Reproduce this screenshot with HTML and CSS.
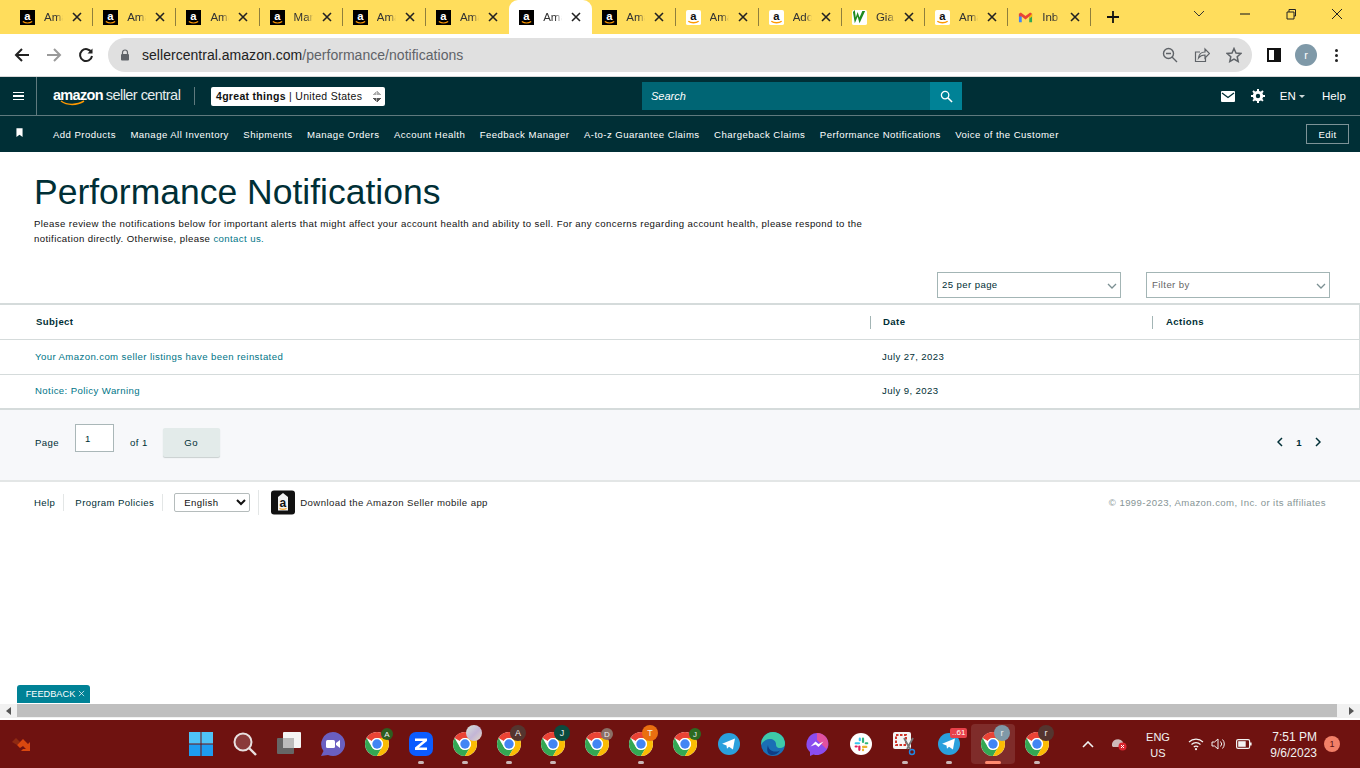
FILE: index.html
```html
<!DOCTYPE html>
<html lang="en">
<head>
<meta charset="utf-8">
<title>Performance Notifications</title>
<link rel="stylesheet" href="styles.css">
</head>
<body>
<svg class="defs" width="0" height="0">
  <symbol id="chrome" viewBox="0 0 24 24">
    <circle cx="12" cy="12" r="12" fill="#fff"/>
    <path fill="#ea4335" d="M12 0a12 12 0 0 1 10.39 6H12a6 6 0 0 0-5.2 3L1.61 6A12 12 0 0 1 12 0z"/>
    <path fill="#34a853" d="M1.61 6l5.19 9a6 6 0 0 0 10.4 0L12 24A12 12 0 0 1 1.61 6z"/>
    <path fill="#fbbc04" d="M22.39 6H12a6 6 0 0 1 5.2 9L12 24A12 12 0 0 0 22.39 6z"/>
    <circle cx="12" cy="12" r="6" fill="#fff"/>
    <circle cx="12" cy="12" r="4.7" fill="#4285f4"/>
  </symbol>
  <symbol id="fav-dark" viewBox="0 0 16 16">
    <rect width="16" height="16" fill="#000"/>
    <text x="8" y="10.5" text-anchor="middle" class="fav-a fav-a-light">a</text>
    <path d="M3 12.2c3 2 7 2 10 0" fill="none" stroke="#f90" stroke-width="1.3"/>
  </symbol>
  <symbol id="fav-light" viewBox="0 0 16 16">
    <rect width="16" height="16" rx="2" fill="#fff"/>
    <text x="8" y="10.5" text-anchor="middle" class="fav-a fav-a-dark">a</text>
    <path d="M2.5 12c3 2.2 8 2.2 11 0" fill="none" stroke="#f90" stroke-width="1.5"/>
  </symbol>
  <symbol id="tab-x" viewBox="0 0 10 10">
    <path d="M1 1l8 8M9 1l-8 8" fill="none" stroke="#222" stroke-width="1.6"/>
  </symbol>
  <symbol id="chev" viewBox="0 0 10 6">
    <path d="M1 1l4 4 4-4" fill="none" stroke="#7b8f92" stroke-width="1.3"/>
  </symbol>
</svg>

<header class="tabstrip">
  <div class="tab"><svg class="fav"><use href="#fav-dark"/></svg><span class="tab-label">Ama</span><svg class="tab-close"><use href="#tab-x"/></svg></div>
  <div class="tab"><svg class="fav"><use href="#fav-dark"/></svg><span class="tab-label">Ama</span><svg class="tab-close"><use href="#tab-x"/></svg></div>
  <div class="tab"><svg class="fav"><use href="#fav-dark"/></svg><span class="tab-label">Ama</span><svg class="tab-close"><use href="#tab-x"/></svg></div>
  <div class="tab"><svg class="fav"><use href="#fav-dark"/></svg><span class="tab-label">Mar</span><svg class="tab-close"><use href="#tab-x"/></svg></div>
  <div class="tab"><svg class="fav"><use href="#fav-dark"/></svg><span class="tab-label">Ama</span><svg class="tab-close"><use href="#tab-x"/></svg></div>
  <div class="tab tab-before-active"><svg class="fav"><use href="#fav-dark"/></svg><span class="tab-label">Ama</span><svg class="tab-close"><use href="#tab-x"/></svg></div>
  <div class="tab tab-active"><svg class="fav"><use href="#fav-dark"/></svg><span class="tab-label">Ama</span><svg class="tab-close"><use href="#tab-x"/></svg></div>
  <div class="tab"><svg class="fav"><use href="#fav-dark"/></svg><span class="tab-label">Ama</span><svg class="tab-close"><use href="#tab-x"/></svg></div>
  <div class="tab"><svg class="fav"><use href="#fav-light"/></svg><span class="tab-label">Ama</span><svg class="tab-close"><use href="#tab-x"/></svg></div>
  <div class="tab"><svg class="fav"><use href="#fav-light"/></svg><span class="tab-label">Ado</span><svg class="tab-close"><use href="#tab-x"/></svg></div>
  <div class="tab"><svg class="fav" viewBox="0 0 16 16"><rect width="16" height="16" rx="2" fill="#fff"/><path d="M1 2l2 12 3-7 2 7 6-13h-3l-3 7-2-6-2 6-1-8z" fill="#1f8a1f"/></svg><span class="tab-label">Gia</span><svg class="tab-close"><use href="#tab-x"/></svg></div>
  <div class="tab"><svg class="fav"><use href="#fav-light"/></svg><span class="tab-label">Ama</span><svg class="tab-close"><use href="#tab-x"/></svg></div>
  <div class="tab"><svg class="fav" viewBox="0 0 16 16"><path d="M1 4v9h3V7z" fill="#4285f4"/><path d="M15 4v9h-3V7z" fill="#34a853"/><path d="M1 4l2-1.4L8 6.5l5-3.9L15 4v3l-3 0-4 3-4-3-3 0z" fill="#ea4335"/><path d="M12 7l3-3v3l-3 2.2z" fill="#fbbc04"/></svg><span class="tab-label">Inb</span><svg class="tab-close"><use href="#tab-x"/></svg></div>
  <svg class="newtab" viewBox="0 0 14 14"><path d="M7 1v12M1 7h12" fill="none" stroke="#111" stroke-width="1.8"/></svg>
  <div class="win-controls">
    <svg class="win-btn" viewBox="0 0 14 14"><path d="M2 4l5 5 5-5" fill="none" stroke="#333" stroke-width="1"/></svg>
    <svg class="win-btn" viewBox="0 0 14 14"><path d="M2 7h10" fill="none" stroke="#222" stroke-width="1.1"/></svg>
    <svg class="win-btn" viewBox="0 0 14 14"><path d="M3 5h7v7H3zM5 5V2.5h6.5V9H10" fill="none" stroke="#222" stroke-width="1"/></svg>
    <svg class="win-btn" viewBox="0 0 14 14"><path d="M2 2l10 10M12 2L2 12" fill="none" stroke="#222" stroke-width="1"/></svg>
  </div>
</header>

<div class="toolbar">
  <svg class="tool" viewBox="0 0 16 16"><path d="M15 8H2M8 2L2 8l6 6" fill="none" stroke="#222" stroke-width="2"/></svg>
  <svg class="tool" viewBox="0 0 16 16"><path d="M1 8h13M8 2l6 6-6 6" fill="none" stroke="#9a9a9a" stroke-width="2"/></svg>
  <svg class="tool" viewBox="0 0 16 16"><path d="M13.5 5.5A6 6 0 1 0 14 9" fill="none" stroke="#222" stroke-width="2"/><path d="M14.5 1.5v5h-5z" fill="#222"/></svg>
  <div class="omnibox">
    <svg class="lock" viewBox="0 0 10 12"><path d="M2.500 5V3.500a2.500 2.500 0 0 1 5 0V5" fill="none" stroke="#5f6368" stroke-width="1.2"/><rect x="1" y="5" width="8" height="6.500" rx="1" fill="#5f6368"/></svg>
    <span class="url"><span class="url-host">sellercentral.amazon.com</span>/performance/notifications</span>
    <span class="omni-icons">
      <svg class="omni-ic" viewBox="0 0 16 16"><circle cx="6.500" cy="6.500" r="5" fill="none" stroke="#5f6368" stroke-width="1.400"/><path d="M4 6.500h5M10 10l5 5" fill="none" stroke="#5f6368" stroke-width="1.400"/></svg>
      <svg class="omni-ic" viewBox="0 0 16 16"><path d="M6 5H1.500v9.500h10V11" fill="none" stroke="#5f6368" stroke-width="1.200"/><path d="M4.500 11c.5-4 3-6 6.500-6V2l4.500 4.500L11 11V8c-3 0-5 1-6.500 3z" fill="none" stroke="#5f6368" stroke-width="1.200"/></svg>
      <svg class="omni-ic" viewBox="0 0 16 16"><path d="M8 1.500l2 4.500 4.800.5-3.600 3.200 1 4.800L8 12l-4.200 2.500 1-4.800L1.200 6.500 6 6z" fill="none" stroke="#5f6368" stroke-width="1.500"/></svg>
    </span>
  </div>
  <svg class="side-panel" viewBox="0 0 14 14"><rect x="1" y="1" width="12" height="12" fill="none" stroke="#111" stroke-width="2"/><rect x="7" y="1" width="6" height="12" fill="#111"/></svg>
  <span class="profile">r</span>
  <span class="kebab"><i></i><i></i><i></i></span>
</div>

<nav class="sc-nav">
  <div class="nav-top">
    <span class="burger"><i></i><i></i><i></i></span>
    <div class="brand">
      <span class="brand-mark">amazon<svg class="smile" viewBox="0 0 26 6"><path d="M1 1c6 4.500 16 4.500 23 0" fill="none" stroke="#f90" stroke-width="1.500"/></svg></span>
      <span class="brand-sub">seller central</span>
    </div>
    <div class="store-select"><span class="store-name"><b>4great things</b> | United States</span><span class="store-arrows"></span></div>
    <div class="search"><span class="search-field">Search</span><span class="search-btn"><svg viewBox="0 0 14 14"><circle cx="5.500" cy="5.500" r="4" fill="none" stroke="#fff" stroke-width="1.400"/><path d="M8.500 8.500l4.500 4.500" stroke="#fff" stroke-width="1.600"/></svg></span></div>
    <div class="nav-right">
      <svg class="mail" viewBox="0 0 14 11"><rect width="14" height="11" rx="1" fill="#fff"/><path d="M1 2l6 4.500L13 2" fill="none" stroke="#002f36" stroke-width="1.300"/></svg>
      <svg class="gear" viewBox="0 0 14 14"><circle cx="7" cy="7" r="3.700" fill="none" stroke="#fff" stroke-width="3"/><path d="M7 0v14M0 7h14M2 2l10 10M12 2L2 12" stroke="#fff" stroke-width="2" stroke-dasharray="2.500 9 2.500"/></svg>
      <span class="nav-lang">EN<i class="caret"></i></span>
      <span class="nav-help">Help</span>
    </div>
  </div>
  <div class="nav-bottom">
    <svg class="bookmark" viewBox="0 0 8 10"><path d="M.5 0h7v10L4 7.500.5 10z" fill="#fff"/></svg>
    <ul class="quick-links">
      <li>Add Products</li>
      <li>Manage All Inventory</li>
      <li>Shipments</li>
      <li>Manage Orders</li>
      <li>Account Health</li>
      <li>Feedback Manager</li>
      <li>A-to-z Guarantee Claims</li>
      <li>Chargeback Claims</li>
      <li>Performance Notifications</li>
      <li>Voice of the Customer</li>
    </ul>
    <span class="edit-btn">Edit</span>
  </div>
</nav>

<main class="page">
  <section class="intro">
    <h1>Performance Notifications</h1>
    <p>Please review the notifications below for important alerts that might affect your account health and ability to sell. For any concerns regarding account health, please respond to the notification directly. Otherwise, please <a class="link">contact us.</a></p>
  </section>
  <div class="filters">
    <div class="dropdown"><span>25 per page</span><svg class="chev"><use href="#chev"/></svg></div>
    <div class="dropdown dropdown-muted"><span>Filter by</span><svg class="chev"><use href="#chev"/></svg></div>
  </div>
  <div class="table">
    <div class="row row-head">
      <div class="cell cell-subject">Subject</div>
      <div class="cell cell-date"><span class="divider"></span>Date</div>
      <div class="cell cell-actions"><span class="divider"></span>Actions</div>
    </div>
    <div class="row">
      <div class="cell cell-subject"><a class="link">Your Amazon.com seller listings have been reinstated</a></div>
      <div class="cell cell-date">July 27, 2023</div>
      <div class="cell cell-actions"></div>
    </div>
    <div class="row">
      <div class="cell cell-subject"><a class="link">Notice: Policy Warning</a></div>
      <div class="cell cell-date">July 9, 2023</div>
      <div class="cell cell-actions"></div>
    </div>
  </div>
  <div class="pager">
    <span class="pager-page">Page</span>
    <span class="pager-input">1</span>
    <span class="pager-of">of 1</span>
    <span class="pager-go">Go</span>
    <span class="pager-nav">
      <svg viewBox="0 0 6 10"><path d="M5 1L1 5l4 4" fill="none" stroke="#002f36" stroke-width="1.500"/></svg>
      <b>1</b>
      <svg viewBox="0 0 6 10"><path d="M1 1l4 4-4 4" fill="none" stroke="#002f36" stroke-width="1.500"/></svg>
    </span>
  </div>
  <footer class="foot">
    <span class="foot-link">Help</span>
    <span class="foot-link foot-link-last">Program Policies</span>
    <select class="foot-select"><option>English</option></select>
    <span class="foot-app">
      <svg class="foot-tag" viewBox="0 0 24 24"><rect width="24" height="24" rx="3" fill="#111"/><path d="M12 2.500l5 4V20H7V6.500z" fill="#f2f2f2"/><text x="12" y="16" text-anchor="middle" class="fav-a fav-a-dark">a</text><path d="M8.500 18c2 1 5 1 7 0" stroke="#f90" fill="none"/></svg>
      Download the Amazon Seller mobile app
    </span>
    <span class="foot-copy">© 1999-2023, Amazon.com, Inc. or its affiliates</span>
  </footer>
  <div class="feedback">FEEDBACK <svg viewBox="0 0 8 8"><path d="M1 1l6 6M7 1L1 7" stroke="#fff" stroke-width=".8"/></svg></div>
</main>

<div class="hscroll">
  <span class="hs-arrow hs-left"></span>
  <span class="hs-thumb"></span>
  <span class="hs-arrow hs-right"></span>
</div>

<div class="taskbar">
  <svg class="tb-corner" viewBox="0 0 24 16"><path d="M1 6l4-4 4 4-3 3z" fill="#8f2a12"/><path d="M6 9l6-6 5 5 2-2v9H10l2-2 3 0-3-3-3 2z" fill="#d9480f"/></svg>
  <div class="tb-apps">
    <span class="app"><svg class="ic" viewBox="0 0 24 24"><path fill="#4fc3f7" d="M0 0h11.500v11.500H0zM12.500 0H24v11.500H12.500z"/><path fill="#1e9cf0" d="M0 12.500h11.500V24H0zM12.500 12.500H24V24H12.500z"/></svg></span>
    <span class="app"><svg class="ic" viewBox="0 0 24 24"><circle cx="10" cy="10" r="8.500" fill="#8a3a3a" stroke="#e8e0e0" stroke-width="2"/><path d="M16 16l7 7" stroke="#e8e0e0" stroke-width="2.400"/></svg></span>
    <span class="app"><svg class="ic" viewBox="0 0 24 24"><rect x="0" y="6" width="17" height="16" rx="1" fill="#666"/><rect x="6" y="0" width="18" height="16" rx="1" fill="#f4f4f4"/><rect x="6" y="6" width="11" height="10" fill="#bbb"/></svg></span>
    <span class="app"><svg class="ic" viewBox="0 0 24 24"><path d="M12 0a12 12 0 1 1-5 22.900L0 24l2.500-5A12 12 0 0 1 12 0z" fill="#6a5fc1"/><rect x="5" y="8" width="9" height="8" rx="1.500" fill="#fff"/><path d="M15 11l4-3v8l-4-3z" fill="#fff"/></svg></span>
    <span class="app"><svg class="ic"><use href="#chrome"/></svg><b class="badge b-olive b-small">A</b></span>
    <span class="app app-open"><svg class="ic" viewBox="0 0 24 24"><rect width="24" height="24" rx="7" fill="#0b5cff"/><path d="M6 6.500h12v2.500l-8 6.500h8V18H6v-2.500l8-6.500H6z" fill="#fff"/></svg></span>
    <span class="app app-open"><svg class="ic"><use href="#chrome"/></svg><b class="badge b-pale"></b></span>
    <span class="app app-open"><svg class="ic"><use href="#chrome"/></svg><b class="badge b-brown">A</b></span>
    <span class="app app-open"><svg class="ic"><use href="#chrome"/></svg><b class="badge b-teal">J</b></span>
    <span class="app"><svg class="ic"><use href="#chrome"/></svg><b class="badge b-tan b-small">D</b></span>
    <span class="app app-open"><svg class="ic"><use href="#chrome"/></svg><b class="badge b-orange">T</b></span>
    <span class="app"><svg class="ic"><use href="#chrome"/></svg><b class="badge b-green b-small">J</b></span>
    <span class="app"><svg class="ic ic-22" viewBox="0 0 24 24"><circle cx="12" cy="12" r="12" fill="#2aa0dc"/><path d="M4.500 11.800L18.500 6l-2.200 12-4.300-3-2.200 2.200-.5-3.700z" fill="#fff"/></svg></span>
    <span class="app"><svg class="ic" viewBox="0 0 24 24"><circle cx="12" cy="12" r="12" fill="#1a6fb5"/><path d="M12 0a12 12 0 0 1 12 12c0 3-3 4.500-6 4-3-.5-3-3-3-4 0-3-3-5-6-5-4 0-8 3-8.800 6A12 12 0 0 1 12 0z" fill="#3fc9a8"/><path d="M7 13c0 4 4 7 8 6.500 2 0 3-.5 4-1-2 3-5 4.500-8 4.500-4 0-6-4-4-10z" fill="#0f3d85"/></svg></span>
    <span class="app"><svg class="ic" viewBox="0 0 24 24"><path d="M12 1a11.500 11 0 1 1-3.500 21.500L5 24v-4A11 11 0 0 1 12 1z" fill="#8a4df0"/><path d="M12 1c6 0 11 4.500 11 10.500 0 2-.5 4-1.500 5.500L12 8z" fill="#e2519f"/><path d="M5.500 14.500l5-5 3 2.500 5-2.500-5 5.500-3-2.500z" fill="#fff"/></svg></span>
    <span class="app"><svg class="ic ic-22" viewBox="0 0 24 24"><circle cx="12" cy="12" r="12" fill="#fff"/><rect x="5" y="10" width="6" height="2.400" rx="1.200" fill="#36c5f0"/><rect x="9.500" y="5" width="2.400" height="4" rx="1.200" fill="#36c5f0"/><rect x="13" y="5" width="2.400" height="6" rx="1.200" fill="#2eb67d"/><rect x="16" y="10" width="4" height="2.400" rx="1.200" fill="#2eb67d"/><rect x="13" y="14" width="6" height="2.400" rx="1.200" fill="#ecb22e"/><rect x="13" y="17" width="2.400" height="3" rx="1.200" fill="#ecb22e"/><rect x="9" y="13.500" width="2.400" height="6" rx="1.200" fill="#e01e5a"/><rect x="5" y="13.500" width="3.500" height="2.400" rx="1.200" fill="#e01e5a"/></svg></span>
    <span class="app app-open"><svg class="ic" viewBox="0 0 24 24"><rect y="0" width="18" height="17" rx="2" fill="#f5f5f5"/><path d="M3 3h10v10H3z" fill="none" stroke="#d0352a" stroke-width="2" stroke-dasharray="2.500 1.500"/><path d="M11 6l6 11M20 6l-6 11" stroke="#777" stroke-width="1.800"/><circle cx="19" cy="20" r="2.500" fill="none" stroke="#1f88e5" stroke-width="1.400"/></svg></span>
    <span class="app app-open"><svg class="ic ic-22" viewBox="0 0 24 24"><circle cx="12" cy="12" r="12" fill="#2aa0dc"/><path d="M4.500 11.800L18.500 6l-2.200 12-4.300-3-2.200 2.200-.5-3.700z" fill="#fff"/></svg><b class="count">..61</b></span>
    <span class="app app-open app-active"><svg class="ic"><use href="#chrome"/></svg><b class="badge b-steel">r</b></span>
    <span class="app app-open"><svg class="ic"><use href="#chrome"/></svg><b class="badge b-brown">r</b></span>
  </div>
  <div class="tray">
    <svg class="tray-chev" viewBox="0 0 12 7"><path d="M1 6l5-5 5 5" fill="none" stroke="#f2f2f2" stroke-width="1.600"/></svg>
    <span class="tray-vpn"><svg viewBox="0 0 16 14"><path d="M1 9a6 6 0 0 1 11-4v5H2z" fill="#cdb9b9"/><circle cx="11.500" cy="9.500" r="4" fill="#d9252f"/><path d="M10 8l3 3M13 8l-3 3" stroke="#fff" stroke-width="1"/></svg></span>
    <span class="tray-lang">ENG<br>US</span>
    <svg class="tray-ic" viewBox="0 0 16 14"><path d="M1 5a10 10 0 0 1 14 0M3.500 7.500a6.500 6.500 0 0 1 9 0M5.800 10a3 3 0 0 1 4.400 0" fill="none" stroke="#f2f2f2" stroke-width="1.200"/><circle cx="8" cy="12.200" r="1.100" fill="#f2f2f2"/></svg>
    <svg class="tray-ic tray-vol" viewBox="0 0 16 14"><path d="M1 5v4h2.500L7 12V2L3.500 5z" fill="none" stroke="#f2f2f2"/><path d="M9.500 4.500a3.500 3.500 0 0 1 0 5M11.500 2.500a6.500 6.500 0 0 1 0 9" fill="none" stroke="#f2f2f2"/></svg>
    <svg class="tray-ic tray-bat" viewBox="0 0 16 10"><rect x=".6" y=".6" width="13" height="8.800" rx="1.500" fill="none" stroke="#f2f2f2" stroke-width="1.200"/><rect x="2.200" y="2.200" width="7.500" height="5.600" fill="#f2f2f2"/><rect x="14" y="3.500" width="1.600" height="3" fill="#f2f2f2"/></svg>
    <span class="tray-time">7:51 PM<br>9/6/2023</span>
    <span class="tray-note">1</span>
  </div>
</div>
</body>
</html>
```

FILE: styles.css
```css
* { box-sizing: border-box; }
html, body { margin: 0; padding: 0; }
body {
  width: 1360px;
  height: 768px;
  overflow: hidden;
  display: flex;
  flex-direction: column;
  font-family: "Liberation Sans", Arial, sans-serif;
  color: #002f36;
  background: #fff;
}
.defs { position: absolute; }
.fav-a { font: bold 12px "Liberation Sans", sans-serif; }
.fav-a-light { fill: #fff; }
.fav-a-dark { fill: #111; }

/* browser tabs */
.tabstrip {
  height: 34px;
  flex: none;
  display: flex;
  align-items: center;
  padding-left: 10px;
  background: #ffdd5c;
}
.tab {
  width: 83.2px;
  height: 34px;
  flex: none;
  display: flex;
  align-items: center;
  padding-left: 10px;
  font-size: 11.5px;
  color: #333;
  background-image: linear-gradient(#8f7f3c, #8f7f3c);
  background-size: 1px 18px;
  background-position: right center;
  background-repeat: no-repeat;
}
.tab-before-active { background-image: none; }
.tab-active {
  background: #fff;
  border-radius: 9px 9px 0 0;
}
.fav { width: 15px; height: 15px; flex: none; }
.tab-label {
  width: 19px;
  margin-left: 9px;
  overflow: hidden;
  white-space: nowrap;
  -webkit-mask-image: linear-gradient(90deg, #000 65%, transparent);
  mask-image: linear-gradient(90deg, #000 65%, transparent);
}
.tab-close { width: 10px; height: 10px; margin-left: 9px; flex: none; }
.newtab { width: 14px; height: 14px; margin-left: 15px; flex: none; }
.win-controls {
  margin-left: auto;
  display: flex;
  gap: 32px;
  padding-right: 16px;
  margin-top: -6px;
}
.win-btn { width: 14px; height: 14px; }

/* toolbar */
.toolbar {
  height: 43px;
  flex: none;
  display: flex;
  align-items: center;
  padding: 0 14px;
  background: #fff;
  border-bottom: 1px solid #d8d8d8;
}
.tool { width: 16px; height: 16px; flex: none; margin-right: 16px; }
.omnibox {
  width: 1144px;
  height: 34px;
  margin-left: -2px;
  display: flex;
  align-items: center;
  padding: 0 7px 0 12px;
  border-radius: 17px;
  background: #e0e0e0;
  font-size: 14px;
  letter-spacing: .03px;
  color: #5f6368;
}
.lock { width: 10px; height: 12px; margin-right: 12px; }
.url-host { color: #222; }
.omni-icons { margin-left: auto; display: flex; gap: 16px; padding-right: 3px; }
.omni-ic { width: 16px; height: 16px; }
.side-panel { width: 14px; height: 14px; margin-left: 15px; }
.profile {
  width: 22px;
  height: 22px;
  margin-left: 14px;
  border-radius: 50%;
  background: #7f99a8;
  color: #fff;
  font-size: 11px;
  display: flex;
  align-items: center;
  justify-content: center;
}
.kebab {
  margin-left: 18px;
  display: flex;
  flex-direction: column;
  gap: 2px;
}
.kebab i { width: 3px; height: 3px; border-radius: 50%; background: #222; }

/* seller central nav */
.sc-nav { flex: none; background: #002f36; color: #fff; }
.nav-top {
  height: 39px;
  display: flex;
  align-items: center;
  border-bottom: 1px solid #5f7a7e;
}
.burger {
  width: 37px;
  height: 100%;
  flex: none;
  display: flex;
  flex-direction: column;
  justify-content: center;
  align-items: center;
  gap: 2px;
  border-right: 1px solid #5f7a7e;
}
.burger i { width: 11px; height: 1.5px; background: #fff; }
.brand {
  width: 142px;
  margin-left: 16px;
  height: 18px;
  flex: none;
  display: flex;
  align-items: baseline;
  border-right: 1px solid #5f7a7e;
  font-size: 14.5px;
  line-height: 16px;
}
.brand-mark { font-weight: bold; position: relative; letter-spacing: -.7px; }
.smile { position: absolute; left: 7px; top: 13px; width: 26px; height: 6px; }
.brand-sub { margin-left: 3px; color: #e6ecec; letter-spacing: -.55px; }
.store-select {
  width: 174px;
  height: 19px;
  margin-left: 16px;
  flex: none;
  display: flex;
  align-items: center;
  padding-left: 5px;
  border-radius: 2px;
  background: #fff;
  color: #111;
  font-size: 10.5px;
  letter-spacing: .3px;
  position: relative;
}
.store-name { white-space: nowrap; }
.store-arrows {
  position: absolute;
  right: 4px;
  top: 4px;
  width: 9px;
  height: 11px;
  background:
    linear-gradient(to top left, #aaa 50%, transparent 50%) left top / 50% 4px no-repeat,
    linear-gradient(to top right, #aaa 50%, transparent 50%) right top / 50% 4px no-repeat,
    linear-gradient(to bottom left, #555 50%, transparent 50%) left bottom / 50% 4px no-repeat,
    linear-gradient(to bottom right, #555 50%, transparent 50%) right bottom / 50% 4px no-repeat;
}
.search {
  width: 320px;
  height: 28px;
  margin-left: 257px;
  flex: none;
  display: flex;
  background: #006574;
}
.search-field {
  flex: 1;
  display: flex;
  align-items: center;
  padding-left: 9px;
  font-size: 11px;
  font-style: italic;
  color: #fff;
}
.search-btn {
  width: 32px;
  background: #008296;
  display: flex;
  align-items: center;
  justify-content: center;
}
.search-btn svg { width: 13px; height: 13px; }
.nav-right {
  margin-left: auto;
  display: flex;
  align-items: center;
  padding-right: 14px;
  font-size: 11.5px;
  letter-spacing: .1px;
}
.mail { width: 14px; height: 11px; }
.gear { width: 14px; height: 14px; margin-left: 16px; }
.nav-lang { margin-left: 15px; display: flex; align-items: center; }
.caret {
  margin-left: 3px;
  border: 3.5px solid transparent;
  border-top-color: #cfd8d9;
  border-bottom: 0;
}
.nav-help { margin-left: 17px; }
.nav-bottom {
  height: 36px;
  display: flex;
  align-items: center;
  padding: 0 11px 0 16px;
}
.bookmark { width: 7px; height: 9px; flex: none; margin-top: -3px; }
.quick-links {
  list-style: none;
  margin: 0 0 0 30px;
  padding: 0;
  display: flex;
  gap: 14.5px;
  font-size: 9.6px;
  letter-spacing: .44px;
  white-space: nowrap;
}
.edit-btn {
  margin-left: auto;
  width: 43px;
  height: 20px;
  display: flex;
  align-items: center;
  justify-content: center;
  border: 1px solid #7d9397;
  font-size: 9.6px;
  letter-spacing: .4px;
}

/* page */
.page {
  flex: 1;
  min-height: 0;
  position: relative;
  font-size: 9.6px;
  letter-spacing: .4px;
}
.intro { padding: 21px 490px 0 34px; }
h1 {
  margin: 0;
  font-size: 35.5px;
  font-weight: 400;
  line-height: 38px;
  letter-spacing: 0;
  color: #002f36;
}
.intro p {
  margin: 5px 0 0;
  line-height: 15px;
  color: #111;
}
.link { color: #007587; }
.filters {
  display: flex;
  justify-content: flex-end;
  gap: 25px;
  padding: 26px 30px 5px 0;
}
.dropdown {
  width: 184px;
  height: 26px;
  display: flex;
  align-items: center;
  justify-content: space-between;
  padding: 0 3px 1px 4px;
  border: 1px solid #a3b5b5;
}
.dropdown-muted { color: #666; padding-left: 5px; }
.chev { width: 10px; height: 6px; margin-top: 3px; }
.table { border-style: solid; border-color: #d5dbdb; border-width: 2px 1px 2px 0; }
.row {
  height: 35px;
  display: flex;
  align-items: center;
  border-top: 1px solid #d5dbdb;
}
.row-head { border-top: 0; height: 34px; font-weight: bold; }
.row:last-child { height: 34px; }
.cell { display: flex; align-items: center; height: 100%; padding-bottom: 2px; }
.cell-subject { width: 870px; padding-left: 35px; }
.row-head .cell-subject { padding-left: 36px; }
.cell-date { width: 282px; padding-left: 12px; position: relative; }
.row-head .cell-date { padding-left: 13px; }
.cell-actions { flex: 1; padding-left: 14px; position: relative; }
.divider {
  position: absolute;
  left: 0;
  top: 11px;
  width: 1px;
  height: 13px;
  background: #a3b5b5;
}
.pager {
  height: 72px;
  display: flex;
  align-items: center;
  padding: 0 35px 6px;
  background: #f7f8fa;
  border-bottom: 2px solid #e3e6e6;
}
.pager-input {
  width: 39px;
  height: 28px;
  margin-left: 16px;
  padding: 8px 0 0 9px;
  background: #fff;
  border: 1px solid #aab7b8;
  align-self: flex-start;
  margin-top: 14px;
}
.pager-of { margin-left: 16px; }
.pager-go {
  width: 57px;
  height: 29px;
  margin-left: 15px;
  display: flex;
  align-items: center;
  justify-content: center;
  border-radius: 2px;
  background: #e3ebea;
  box-shadow: 0 1px 1px #c8cfcf;
}
.pager-nav {
  margin-left: auto;
  display: flex;
  align-items: center;
  gap: 13px;
  padding-right: 4px;
}
.pager-nav svg { width: 6px; height: 10px; }
.foot {
  display: flex;
  align-items: center;
  padding: 8px 34px 0;
}
.foot-link {
  padding-right: 8px;
  margin-right: 11px;
  border-right: 1px solid #e3e6e6;
  line-height: 17px;
}
.foot-select {
  width: 76px;
  height: 19px;
  font: 9.6px "Liberation Sans", sans-serif;
  letter-spacing: .4px;
  color: #111;
  background: #fff;
  border: 1px solid #b5bcbc;
  border-radius: 2px;
  padding-left: 5px;
}
.foot-app {
  display: flex;
  align-items: center;
  gap: 5px;
  margin-left: 8px;
  padding-left: 12px;
  border-left: 1px solid #e3e6e6;
  color: #222;
}
.foot-tag { width: 24px; height: 25px; }
.foot-copy { margin-left: auto; color: #879596; }
.feedback {
  position: absolute;
  left: 17px;
  bottom: 1px;
  width: 73px;
  height: 18px;
  display: flex;
  align-items: center;
  justify-content: center;
  gap: 3px;
  padding: 0 0 1px 4px;
  border-radius: 3px 3px 0 0;
  background: #008296;
  color: #fff;
  font-size: 9.2px;
  letter-spacing: 0;
}
.feedback svg { width: 7px; height: 7px; }

/* scrollbar */
.hscroll {
  height: 16px;
  flex: none;
  display: flex;
  align-items: center;
  padding-bottom: 1px;
  background: #f1f1f1;
  border-bottom: 2px solid #fff;
}
.hs-arrow { width: 17px; display: flex; justify-content: center; }
.hs-arrow::before {
  content: "";
  border: 4px solid transparent;
  border-left-width: 0;
  border-right: 5px solid #555;
}
.hs-right::before {
  border-right-width: 0;
  border-left: 5px solid #555;
}
.hs-thumb { flex: 1; height: 13px; background: #bfbfbf; margin-right: 6px; }

/* taskbar */
.taskbar {
  height: 48px;
  flex: none;
  display: flex;
  align-items: center;
  background: #6f1210;
  color: #f2f2f2;
}
.tb-corner { width: 24px; height: 16px; margin-left: 11px; flex: none; }
.tb-apps { display: flex; margin-left: 144px; flex: none; }
.app {
  width: 44px;
  height: 40px;
  display: flex;
  align-items: center;
  justify-content: center;
  position: relative;
}
.ic { width: 24px; height: 24px; }
.ic-22 { width: 22px; height: 22px; }
.app-open::after {
  content: "";
  position: absolute;
  left: 19px;
  bottom: 0;
  width: 6px;
  height: 3px;
  border-radius: 2px;
  background: #c9b7b6;
}
.app-active { background: #7f2c2a; border-radius: 4px; }
.app-active::after { left: 14px; width: 16px; background: #ff8a70; }
.badge {
  position: absolute;
  left: 23px;
  top: 1px;
  width: 16px;
  height: 16px;
  border-radius: 50%;
  display: flex;
  align-items: center;
  justify-content: center;
  font-size: 9px;
  font-weight: normal;
  color: #eee;
}
.b-small { width: 12px; height: 12px; left: 26px; top: 4px; font-size: 8px; }
.b-olive { background: #2f5d20; }
.b-pale { background: linear-gradient(135deg, #d7e4d8, #c3b5d6 55%, #e3d9c4); }
.b-brown { background: #54352f; }
.b-teal { background: #0b4a3e; }
.b-tan { background: #8a6f66; }
.b-orange { background: #ea6f10; }
.b-green { background: #2c6a22; }
.b-steel { background: #7f99a8; }
.count {
  position: absolute;
  left: 23px;
  top: 4px;
  height: 10px;
  padding: 0 2px;
  border-radius: 2px;
  background: #e8414a;
  color: #fff;
  font-size: 8px;
  font-weight: normal;
  line-height: 10px;
}
.tray { flex: 1; display: flex; align-items: center; margin-left: 23px; }
.tray-chev { width: 12px; height: 7px; flex: none; }
.tray-vpn { width: 16px; height: 14px; margin-left: 17px; }
.tray-vpn svg { display: block; width: 16px; height: 14px; }
.tray-lang {
  width: 28px;
  margin-left: 17px;
  font-size: 11px;
  line-height: 16px;
  text-align: center;
  padding-top: 1px;
}
.tray-ic { width: 16px; height: 14px; margin-left: 16px; }
.tray-vol { margin-left: 7px; }
.tray-bat { height: 10px; margin-left: 9px; }
.tray-time {
  width: 50px;
  margin-left: 15px;
  font-size: 12px;
  line-height: 16px;
  text-align: right;
  padding-top: 1px;
  white-space: nowrap;
}
.tray-note {
  width: 16px;
  height: 16px;
  margin-left: 7px;
  border-radius: 50%;
  background: #f28068;
  color: #5a1010;
  font-size: 9px;
  display: flex;
  align-items: center;
  justify-content: center;
}
```
